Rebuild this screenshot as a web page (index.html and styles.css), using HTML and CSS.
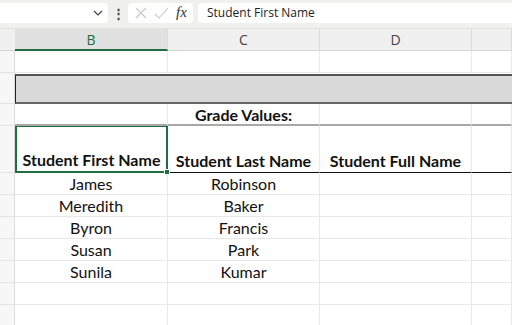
FILE: index.html
```html
<!DOCTYPE html>
<html lang="en">
<head>
    <meta charset="UTF-8">
    <title>Grade Values</title>
    <link rel="stylesheet" href="styles.css">
</head>
<body>
    <!-- Formula bar -->
    <div class="formula-bar">
        <div class="name-box">
            <svg class="chevron" width="10" height="6" viewBox="0 0 10 6"><path d="M1 1 L5 5 L9 1" fill="none" stroke="#444" stroke-width="1.2"/></svg>
        </div>
        <div class="dots">&#8942;</div>
        <div class="fx-box">
            <svg width="14" height="14" viewBox="0 0 14 14"><path d="M2 2 L12 12 M12 2 L2 12" stroke="#c8c8c8" stroke-width="1.1"/></svg>
            <svg width="16" height="14" viewBox="0 0 16 14"><path d="M2 8 L6 12 L15 2" fill="none" stroke="#c8c8c8" stroke-width="1.1"/></svg>
            <span class="fx">fx</span>
        </div>
        <div class="formula-input">Student First Name</div>
    </div>

    <!-- Sheet -->
    <div class="sheet">
        <div class="corner"></div>
        <div class="col-head selected">B</div>
        <div class="col-head">C</div>
        <div class="col-head">D</div>
        <div class="col-head"></div>

        <div class="row-head"></div>
        <div class="cell"></div><div class="cell"></div><div class="cell"></div><div class="cell"></div>

        <div class="row-head"></div>
        <div class="band"></div>

        <div class="row-head"></div>
        <div class="cell underline"></div>
        <div class="cell underline bold">Grade Values:</div>
        <div class="cell underline"></div>
        <div class="cell underline"></div>

        <div class="row-head"></div>
        <div class="cell title active">Student First Name<span class="handle"></span></div>
        <div class="cell title ruled">Student Last Name</div>
        <div class="cell title ruled">Student Full Name</div>
        <div class="cell ruled"></div>

        <div class="row-head"></div>
        <div class="cell">James</div><div class="cell">Robinson</div><div class="cell"></div><div class="cell"></div>
        <div class="row-head"></div>
        <div class="cell">Meredith</div><div class="cell">Baker</div><div class="cell"></div><div class="cell"></div>
        <div class="row-head"></div>
        <div class="cell">Byron</div><div class="cell">Francis</div><div class="cell"></div><div class="cell"></div>
        <div class="row-head"></div>
        <div class="cell">Susan</div><div class="cell">Park</div><div class="cell"></div><div class="cell"></div>
        <div class="row-head"></div>
        <div class="cell">Sunila</div><div class="cell">Kumar</div><div class="cell"></div><div class="cell"></div>
        <div class="row-head"></div>
        <div class="cell"></div><div class="cell"></div><div class="cell"></div><div class="cell"></div>
        <div class="row-head"></div>
        <div class="cell"></div><div class="cell"></div><div class="cell"></div><div class="cell"></div>
    </div>
</body>
</html>
```

FILE: styles.css
```css
* {
    margin: 0;
    padding: 0;
    box-sizing: border-box;
}
body {
    width: 512px;
    height: 325px;
    overflow: hidden;
    background: #fff;
    font-family: 'Lato', 'Liberation Sans', sans-serif;
    color: #111;
}
.formula-bar {
    height: 29px;
    background: #f0f0ee;
    display: flex;
    align-items: center;
    padding-bottom: 3px;
    border-bottom: 1px solid #e2e2e0;
}
.name-box {
    width: 108px;
    height: 20px;
    background: #fff;
    border-radius: 0 4px 4px 0;
    display: flex;
    align-items: center;
    justify-content: flex-end;
    padding-right: 5px;
}
.dots {
    width: 20px;
    text-align: center;
    font-size: 13px;
    font-weight: bold;
    color: #444;
}
.fx-box {
    width: 65px;
    height: 20px;
    background: #fff;
    border-radius: 4px;
    display: flex;
    align-items: center;
    gap: 5px;
    padding-left: 6px;
}
.fx {
    font-family: 'Liberation Serif', serif;
    font-style: italic;
    font-size: 15px;
    color: #333;
    margin-left: 2px;
}
.formula-input {
    flex: 1;
    height: 20px;
    margin-left: 5px;
    background: #fff;
    border-radius: 4px 0 0 4px;
    font-family: 'Open Sans', sans-serif;
    font-size: 12px;
    line-height: 20px;
    padding-left: 9px;
    color: #222;
}
.sheet {
    display: grid;
    grid-template-columns: 15px 153px 152px 152px 40px;
    grid-template-rows: 22px 22px 31px 22px 47px repeat(7, 22px);
    font-size: 16px;
}
.corner, .col-head {
    background: #f0f0f0;
    border-bottom: 1px solid #d4d4d4;
}
.col-head {
    border-right: 1px solid #dcdcdc;
    display: flex;
    align-items: center;
    justify-content: center;
    font-family: 'Open Sans', sans-serif;
    font-size: 14px;
    color: #444;
}
.col-head.selected {
    background: #e1e1e1;
    color: #1e6e42;
    border-bottom: 2px solid #1e6e42;
}
.row-head {
    background: #f7f7f7;
    border-right: 1px solid #dcdcdc;
    border-bottom: 1px solid #e4e4e4;
}
.cell {
    border-right: 1px solid #e8e8e8;
    border-bottom: 1px solid #e8e8e8;
    display: flex;
    align-items: center;
    justify-content: center;
    white-space: nowrap;
}
.band {
    grid-column: 2 / -1;
    background: #d9d9d9;
    border-top: 2px solid #555;
    border-bottom: 2px solid #666;
    border-left: 1px solid #222;
    margin-top: 1px;
}
.cell.underline {
    border-bottom: 2px solid #a8a8a8;
}
.bold, .title {
    font-weight: bold;
}
.title {
    align-items: flex-end;
    padding-bottom: 2px;
}
.ruled {
    border-bottom: 1px solid #111;
}
.active {
    position: relative;
    border: 2px solid #1e6e42;
    border-top-width: 1px;
}
.handle {
    position: absolute;
    right: -4px;
    bottom: -4px;
    width: 6px;
    height: 6px;
    background: #1e6e42;
    border: 1px solid #fff;
}
```
